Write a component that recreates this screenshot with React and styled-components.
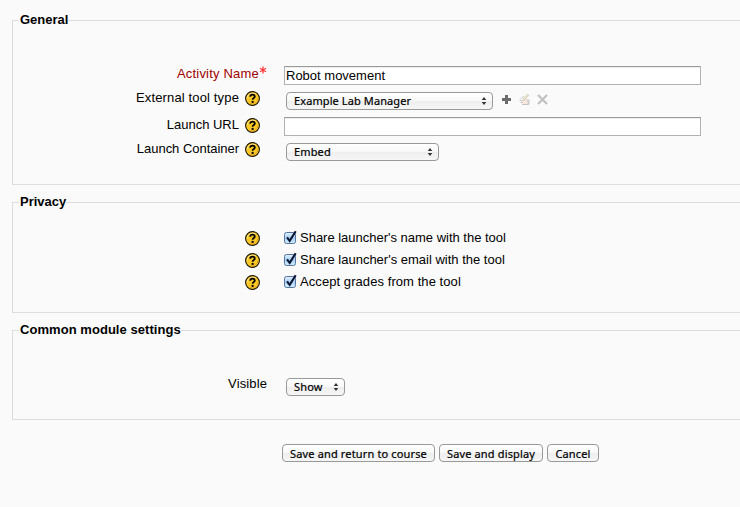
import React from "react";
import styled, { createGlobalStyle } from "styled-components";

const GlobalStyle = createGlobalStyle`
  * { box-sizing: border-box; }
  body {
    margin: 0;
    background: #fafafa;
    color: #000;
    font: 13px/16px "Liberation Sans", Arial, sans-serif;
    overflow: hidden;
  }
`;

const Form = styled.form`
  display: flex;
  flex-direction: column;
  gap: 9px;
  height: 507px;
  padding: 12px 0 0 12px;
`;

const Fieldset = styled.fieldset`
  flex: none;
  width: 740px;
  height: ${(p) => p.$height}px;
  min-width: 0;
  margin: 0;
  padding: ${(p) => p.$top}px 0 0 0;
  border: 1px solid #ddd;
`;

const Legend = styled.legend`
  height: 17px;
  margin-left: 6px;
  padding: 0 0 0 1px;
  font-weight: bold;
  line-height: 16px;
  letter-spacing: ${(p) => p.$spacing || 0}px;
  white-space: nowrap;
`;

const Row = styled.div`
  display: grid;
  grid-template-columns: 254px 1fr;
  column-gap: 17px;
  align-items: start;
  height: ${(p) => p.$height}px;
`;

const LabelCell = styled.div`
  display: flex;
  justify-content: flex-end;
  gap: 6px;
  padding-right: ${(p) => p.$inset || 0}px;
`;

const Label = styled.label`
  margin-top: ${(p) => p.$shift || 0}px;
  color: ${(p) => (p.$required ? "#a00000" : "#000")};
  white-space: nowrap;
  letter-spacing: ${(p) => p.$spacing || 0}px;
`;

const Star = styled.svg`
  flex: none;
  width: 8px;
  height: 8px;
  margin-left: -6px;
`;

const HelpSvg = styled.svg`
  flex: none;
  width: 15px;
  height: 15px;
  margin-top: ${(p) => p.$shift || 0}px;
`;

const TextInput = styled.input`
  display: block;
  width: 417px;
  height: 19px;
  margin: 0;
  padding: 0 1px;
  border: 1px solid #b2b2b2;
  border-top-color: #9b9b9b;
  border-radius: 0;
  background: #fff;
  box-shadow: inset 0 1px 0 #ededed;
  color: #000;
  font: 13px/17px "Liberation Sans", Arial, sans-serif;
  outline: none;
`;

const Controls = styled.div`
  display: flex;
  align-items: flex-start;
  padding: 1px 0 0 2px;
`;

const AquaButton = styled.button`
  display: flex;
  flex: none;
  align-items: center;
  justify-content: ${(p) => (p.$menu ? "space-between" : "center")};
  width: ${(p) => p.$width}px;
  height: 18px;
  margin: 0;
  padding: ${(p) => (p.$menu ? "0 5px 0 7px" : "2px 0 0")};
  border: 1px solid #999;
  border-radius: 4px;
  background: linear-gradient(#fff 0%, #f8f8f8 48%, #eee 52%, #f6f6f6 100%);
  color: #000;
  font: 400 11px/16px "Noto Sans", "Open Sans", sans-serif;
  letter-spacing: ${(p) => p.$spacing ?? 0.15}px;
  -webkit-text-stroke: 0.2px #000;
  white-space: nowrap;
`;

const Tools = styled.div`
  display: flex;
  align-items: center;
  gap: 7px;
  margin: 1px 0 0 9px;
`;

const ToolSvg = styled.svg`
  display: block;
  flex: none;
`;

const CheckLabel = styled.label`
  display: flex;
  gap: 3px;
  white-space: nowrap;
  letter-spacing: ${(p) => p.$spacing || 0}px;
`;

const CheckSvg = styled.svg`
  flex: none;
  width: 13px;
  height: 15px;
  overflow: visible;
  margin-top: -1px;
`;

const CheckText = styled.span`
  margin-top: -1px;
`;

const Actions = styled.div`
  display: flex;
  gap: 4px;
  margin: 15px 0 0 270px;
`;

function Help({ shift }) {
  return (
    <HelpSvg $shift={shift} viewBox="0 0 15 15" aria-label="Help">
      <circle cx="7.5" cy="7.5" r="6.9" fill="#fbc926" stroke="#16120a" strokeWidth="1.1" />
      <path d="M2.2 7.5a5.3 5.3 0 0 1 8-4.6" fill="none" stroke="#ffe58a" strokeWidth="1" />
      <path d="M12.8 7.5a5.3 5.3 0 0 1-8 4.6" fill="none" stroke="#e9a51c" strokeWidth="1" />
      <path d="M5.2 5.8C5.2 4.3 6.1 3.7 7.5 3.7s2.3.7 2.3 1.8c0 1.6-2.2 1.4-2.2 3.3" fill="none" stroke="#000" strokeWidth="1.8" />
      <rect x="6.6" y="9.9" width="2" height="2" fill="#000" />
    </HelpSvg>
  );
}

function Required() {
  return (
    <Star viewBox="0 0 8 8" aria-label="Required">
      <path d="M4 .5v7M1 2.2l6 3.6M7 2.2L1 5.8" stroke="#ff3a3a" strokeWidth="1.3" />
    </Star>
  );
}

function Select({ children, width, spacing }) {
  return (
    <AquaButton type="button" $menu $width={width} $spacing={spacing}>
      <span>{children}</span>
      <svg width="6" height="8" viewBox="0 0 6 8">
        <path d="M.7 3L3 0l2.3 3zM.7 5h4.6L3 8z" fill="#333" />
      </svg>
    </AquaButton>
  );
}

function Check({ children, spacing }) {
  return (
    <CheckLabel $spacing={spacing}>
      <CheckSvg viewBox="0 0 13 15">
        <defs>
          <linearGradient id="aqua" x2="0" y2="1">
            <stop offset="0" stopColor="#e4f2fd" />
            <stop offset=".5" stopColor="#a5cff3" />
            <stop offset="1" stopColor="#d3f1ff" />
          </linearGradient>
        </defs>
        <rect x=".5" y="2.5" width="11" height="11" rx="2" fill="url(#aqua)" stroke="#5873a4" />
        <path d="M3 7.3l2.7 3.5L11.7 1.2" fill="none" stroke="#0b1632" strokeWidth="2.1" />
      </CheckSvg>
      <CheckText>{children}</CheckText>
    </CheckLabel>
  );
}

const checks = [
  { text: "Share launcher's name with the tool", spacing: -0.01 },
  { text: "Share launcher's email with the tool", spacing: 0 },
  { text: "Accept grades from the tool", spacing: 0.07 },
];

export default function App() {
  return (
    <>
      <GlobalStyle />
      <Form onSubmit={(e) => e.preventDefault()}>
        <Fieldset $height={173} $top={37}>
          <Legend>General</Legend>
          <Row $height={25}>
            <LabelCell>
              <Label $required $spacing={0.2}>Activity Name</Label>
              <Required />
            </LabelCell>
            <TextInput defaultValue="Robot movement" />
          </Row>
          <Row $height={26}>
            <LabelCell $inset={7}>
              <Label $shift={-1} $spacing={0.14}>External tool type</Label>
              <Help />
            </LabelCell>
            <Controls>
              <Select width={207} spacing={0.1}>Example Lab Manager</Select>
              <Tools>
                <ToolSvg width="9" height="9" viewBox="0 0 9 9">
                  <path d="M3 0h3v3h3v3H6v3H3V6H0V3h3z" fill="#6b6b6b" />
                </ToolSvg>
                <ToolSvg width="12" height="13" viewBox="0 0 12 13">
                  <path d="M3 7h7v4H5L3 9z" fill="#fae8dc" />
                  <path d="M5 7.5L10.5 1.5" stroke="#d2d0c0" strokeWidth="2.2" />
                  <path d="M5.8 6.6L10.2 1.9" stroke="#f5efbe" strokeWidth=".9" />
                  <path d="M6 3.5H5L2.5 6M1.5 7.5H4M2.5 9.5H5M4 11.5h7M8 7h3.5" fill="none" stroke="#c4c4c4" />
                  <path d="M9.5 7.5h2v4h-2z" fill="#cacaca" />
                </ToolSvg>
                <ToolSvg width="11" height="11" viewBox="0 0 11 11">
                  <path d="M1 1l9 9M10 1L1 10" stroke="#c1c1c1" strokeWidth="2.2" />
                </ToolSvg>
              </Tools>
            </Controls>
          </Row>
          <Row $height={25}>
            <LabelCell $inset={7}>
              <Label>Launch URL</Label>
              <Help shift={1} />
            </LabelCell>
            <TextInput />
          </Row>
          <Row $height={19}>
            <LabelCell $inset={7}>
              <Label $shift={-1} $spacing={-0.03}>Launch Container</Label>
              <Help />
            </LabelCell>
            <Controls>
              <Select width={153}>Embed</Select>
            </Controls>
          </Row>
        </Fieldset>

        <Fieldset $height={119} $top={20}>
          <Legend>Privacy</Legend>
          {checks.map((c) => (
            <Row key={c.text} $height={22}>
              <LabelCell $inset={7}>
                <Help />
              </LabelCell>
              <Check spacing={c.spacing}>{c.text}</Check>
            </Row>
          ))}
        </Fieldset>

        <Fieldset $height={98} $top={38}>
          <Legend $spacing={0.05}>Common module settings</Legend>
          <Row $height={20}>
            <LabelCell>
              <Label $shift={-1} $spacing={0.12}>Visible</Label>
            </LabelCell>
            <Controls>
              <Select width={59}>Show</Select>
            </Controls>
          </Row>
        </Fieldset>

        <Actions>
          <AquaButton type="submit" $width={153}>Save and return to course</AquaButton>
          <AquaButton type="submit" $width={104}>Save and display</AquaButton>
          <AquaButton type="button" $width={52}>Cancel</AquaButton>
        </Actions>
      </Form>
    </>
  );
}
